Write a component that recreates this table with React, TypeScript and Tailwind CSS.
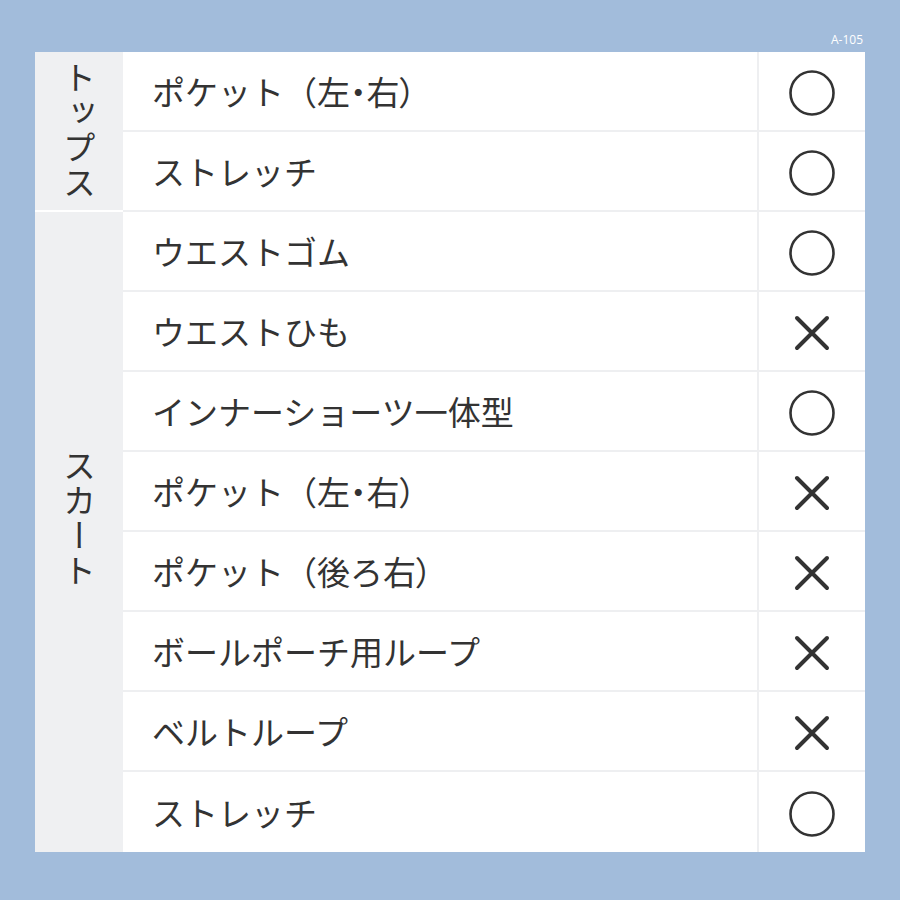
import React from 'react'

type Row = { label: string; ok: boolean }

const tops: Row[] = [
  { label: 'ポケット（左・右）', ok: true },
  { label: 'ストレッチ', ok: true },
]

const skirt: Row[] = [
  { label: 'ウエストゴム', ok: true },
  { label: 'ウエストひも', ok: false },
  { label: 'インナーショーツ一体型', ok: true },
  { label: 'ポケット（左・右）', ok: false },
  { label: 'ポケット（後ろ右）', ok: false },
  { label: 'ボールポーチ用ループ', ok: false },
  { label: 'ベルトループ', ok: false },
  { label: 'ストレッチ', ok: true },
]

const font = { fontFamily: '"Noto Sans CJK JP", "Noto Sans", sans-serif' }

// closing paren and middle dot set proportional, like the original artwork
function Label({ text }: { text: string }) {
  const parts = text.split(/([）・])/)
  return (
    <>
      {parts.map((p, i) =>
        /[）・]/.test(p) ? (
          <span key={i} style={{ fontFeatureSettings: '"palt"' }}>{p}</span>
        ) : (
          <span key={i}>{p}</span>
        )
      )}
    </>
  )
}

function Mark({ ok }: { ok: boolean }) {
  if (ok) {
    return (
      <svg width="48" height="48" viewBox="0 0 48 48">
        <circle cx="24" cy="24" r="21.5" fill="none" stroke="#333" strokeWidth="2.6" />
      </svg>
    )
  }
  return (
    <svg width="36" height="36" viewBox="0 0 36 36">
      <path d="M3 3 L33 33 M33 3 L3 33" stroke="#333" strokeWidth="4" strokeLinecap="round" />
    </svg>
  )
}

function TableRow({ row, last }: { row: Row; last: boolean }) {
  return (
    <div className={`flex h-[80px] ${last ? '' : 'border-b-2 border-[#eeeff1]'}`}>
      <div className="flex-1 flex items-center pl-[29px] pt-[2px] text-[33px] text-[#333]">
        <Label text={row.label} />
      </div>
      <div className="w-[108px] border-l-2 border-[#eeeff1] flex items-center justify-center pt-[3px]">
        <Mark ok={row.ok} />
      </div>
    </div>
  )
}

export default function App() {
  const rows = [...tops, ...skirt]
  return (
    <div className="w-[900px] h-[900px] bg-[#a2bcdb] px-[35px] flex flex-col" style={font}>
      <div className="h-[52px] flex items-start justify-end pt-[34px] pr-[2px]">
        <span className="text-[12px] leading-none text-white" style={{ fontFamily: '"Open Sans", sans-serif' }}>
          A-105
        </span>
      </div>
      <div className="flex bg-white">
        <div className="w-[88px] flex flex-col bg-white">
          <div className="h-[160px] bg-[#eff0f2] border-b-2 border-white flex items-center justify-center">
            <span className="[writing-mode:vertical-rl] text-[33px] text-[#333] leading-none tracking-[2px]">
              トップス
            </span>
          </div>
          <div className="h-[640px] bg-[#eff0f2] flex items-center justify-center pb-[26px]">
            <span className="[writing-mode:vertical-rl] text-[33px] text-[#333] leading-none tracking-[2px]">
              スカート
            </span>
          </div>
        </div>
        <div className="flex-1 flex flex-col">
          {rows.map((r, i) => (
            <TableRow key={i} row={r} last={i === rows.length - 1} />
          ))}
        </div>
      </div>
    </div>
  )
}
